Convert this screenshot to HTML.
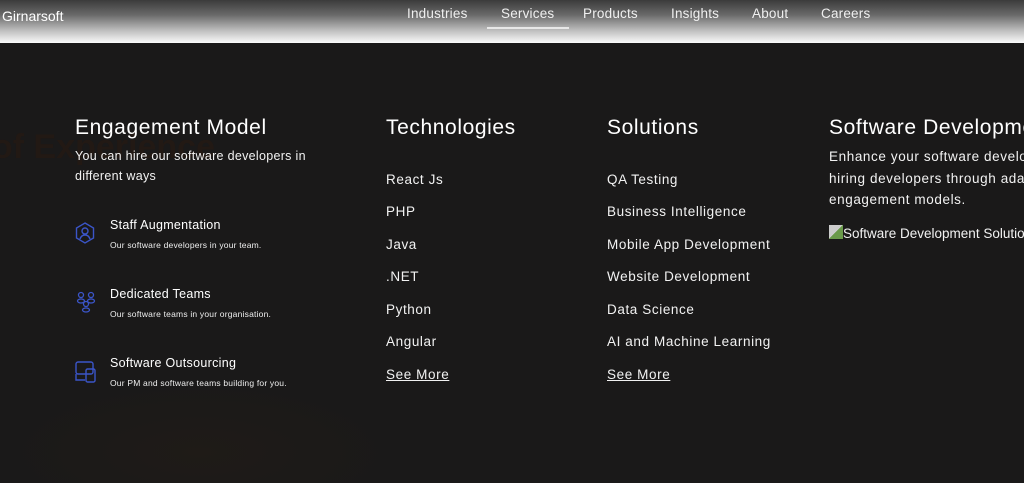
<!DOCTYPE html>
<html><head><meta charset="utf-8"><style>
*{margin:0;padding:0;box-sizing:border-box}
html,body{width:1024px;height:483px;overflow:hidden}
body{background:#1a1919;font-family:"Liberation Sans",sans-serif;color:#f2f2f2;position:relative}
.wrap{position:absolute;left:0;top:0;width:1024px;height:483px;overflow:hidden}
.hdr{position:absolute;left:0;top:0;width:1024px;height:43px;background:linear-gradient(#3b3b3b 0%,#6a6a6a 35%,#bcbcbc 70%,#fafafa 100%)}
.logo{position:absolute;left:2px;top:8px;font-size:14px;color:#fff}
.nav{position:absolute;top:6px;font-size:13.5px;color:#f0f0f0;letter-spacing:0.2px}
.ul{position:absolute;left:487px;top:27px;width:82px;height:2px;background:#e8e8e8}
.a{position:absolute;white-space:nowrap}
h2{position:absolute;font-size:21px;font-weight:normal;color:#fff;white-space:nowrap;letter-spacing:0.6px}
.sub{font-size:12.5px;line-height:19.5px;letter-spacing:0.3px}
.it{font-size:13.5px;letter-spacing:0.6px}
.t{font-size:12.5px;color:#fff;letter-spacing:0.3px}
.s{font-size:8.5px;color:#eee;letter-spacing:0.2px}
.sm{text-decoration:underline}
.ghost{position:absolute;left:-8px;top:128px;font-size:34px;font-weight:bold;color:#221914;white-space:nowrap}
</style></head><body><div class="wrap">
<div style="position:absolute;left:0;top:380px;width:400px;height:103px;background:radial-gradient(ellipse at 50% 70%,#1f1b17 0%,#1a1919 70%)"></div>
<div class="ghost">of Experience</div>
<div class="hdr"></div>
<div class="logo">Girnarsoft</div>
<div class="nav" style="left:407px">Industries</div>
<div class="nav" style="left:501px">Services</div>
<div class="nav" style="left:583px">Products</div>
<div class="nav" style="left:671px">Insights</div>
<div class="nav" style="left:752px">About</div>
<div class="nav" style="left:821px">Careers</div>
<div class="ul"></div>

<h2 style="left:75px;top:116px">Engagement Model</h2>
<div class="a sub" style="left:75px;top:147px">You can hire our software developers in<br>different ways</div>

<svg class="a" style="left:75px;top:222px" width="20" height="22" viewBox="0 0 20 22" fill="none" stroke="#3b55c8" stroke-width="1.4"><path d="M10 1L18.5 6v10L10 21 1.5 16V6z"/><circle cx="10" cy="9" r="3"/><path d="M5 17c1-3 3-4 5-4s4 1 5 4"/></svg>
<div class="a t" style="left:110px;top:218px">Staff Augmentation</div>
<div class="a s" style="left:110px;top:240px">Our software developers in your team.</div>

<svg class="a" style="left:75px;top:291px" width="22" height="22" viewBox="0 0 22 22" fill="none" stroke="#3b55c8" stroke-width="1.3"><circle cx="6" cy="4" r="2.5"/><circle cx="16" cy="4" r="2.5"/><ellipse cx="6" cy="10" rx="3.5" ry="2"/><ellipse cx="16" cy="10" rx="3.5" ry="2"/><circle cx="11" cy="13" r="2.5"/><ellipse cx="11" cy="19" rx="3.5" ry="2"/></svg>
<div class="a t" style="left:110px;top:287px">Dedicated Teams</div>
<div class="a s" style="left:110px;top:309px">Our software teams in your organisation.</div>

<svg class="a" style="left:75px;top:361px" width="22" height="22" viewBox="0 0 22 22" fill="none" stroke="#3b55c8" stroke-width="1.4"><rect x="1" y="1" width="17" height="12" rx="2"/><path d="M1 13v6h9"/><rect x="11" y="8" width="9" height="13" rx="1.5"/></svg>
<div class="a t" style="left:110px;top:356px">Software Outsourcing</div>
<div class="a s" style="left:110px;top:378px">Our PM and software teams building for you.</div>

<h2 style="left:386px;top:116px">Technologies</h2>
<div class="a it" style="left:386px;top:172px">React Js</div>
<div class="a it" style="left:386px;top:204px">PHP</div>
<div class="a it" style="left:386px;top:237px">Java</div>
<div class="a it" style="left:386px;top:269px">.NET</div>
<div class="a it" style="left:386px;top:302px">Python</div>
<div class="a it" style="left:386px;top:334px">Angular</div>
<div class="a it sm" style="left:386px;top:367px">See More</div>

<h2 style="left:607px;top:116px">Solutions</h2>
<div class="a it" style="left:607px;top:172px">QA Testing</div>
<div class="a it" style="left:607px;top:204px">Business Intelligence</div>
<div class="a it" style="left:607px;top:237px">Mobile App Development</div>
<div class="a it" style="left:607px;top:269px">Website Development</div>
<div class="a it" style="left:607px;top:302px">Data Science</div>
<div class="a it" style="left:607px;top:334px">AI and Machine Learning</div>
<div class="a it sm" style="left:607px;top:367px">See More</div>

<h2 style="left:829px;top:116px">Software Development Solutions</h2>
<div class="a" style="left:829px;top:146px;font-size:13.5px;line-height:21.5px;letter-spacing:0.6px">Enhance your software development by<br>hiring developers through adaptable<br>engagement models.</div>
<div class="a" style="left:829px;top:225px;width:14px;height:14px;background:linear-gradient(135deg,#ccc 50%,#6a9a4a 50%)"></div>
<div class="a" style="left:843px;top:226px;font-size:13.5px">Software Development Solutions</div>
</div></body></html>
